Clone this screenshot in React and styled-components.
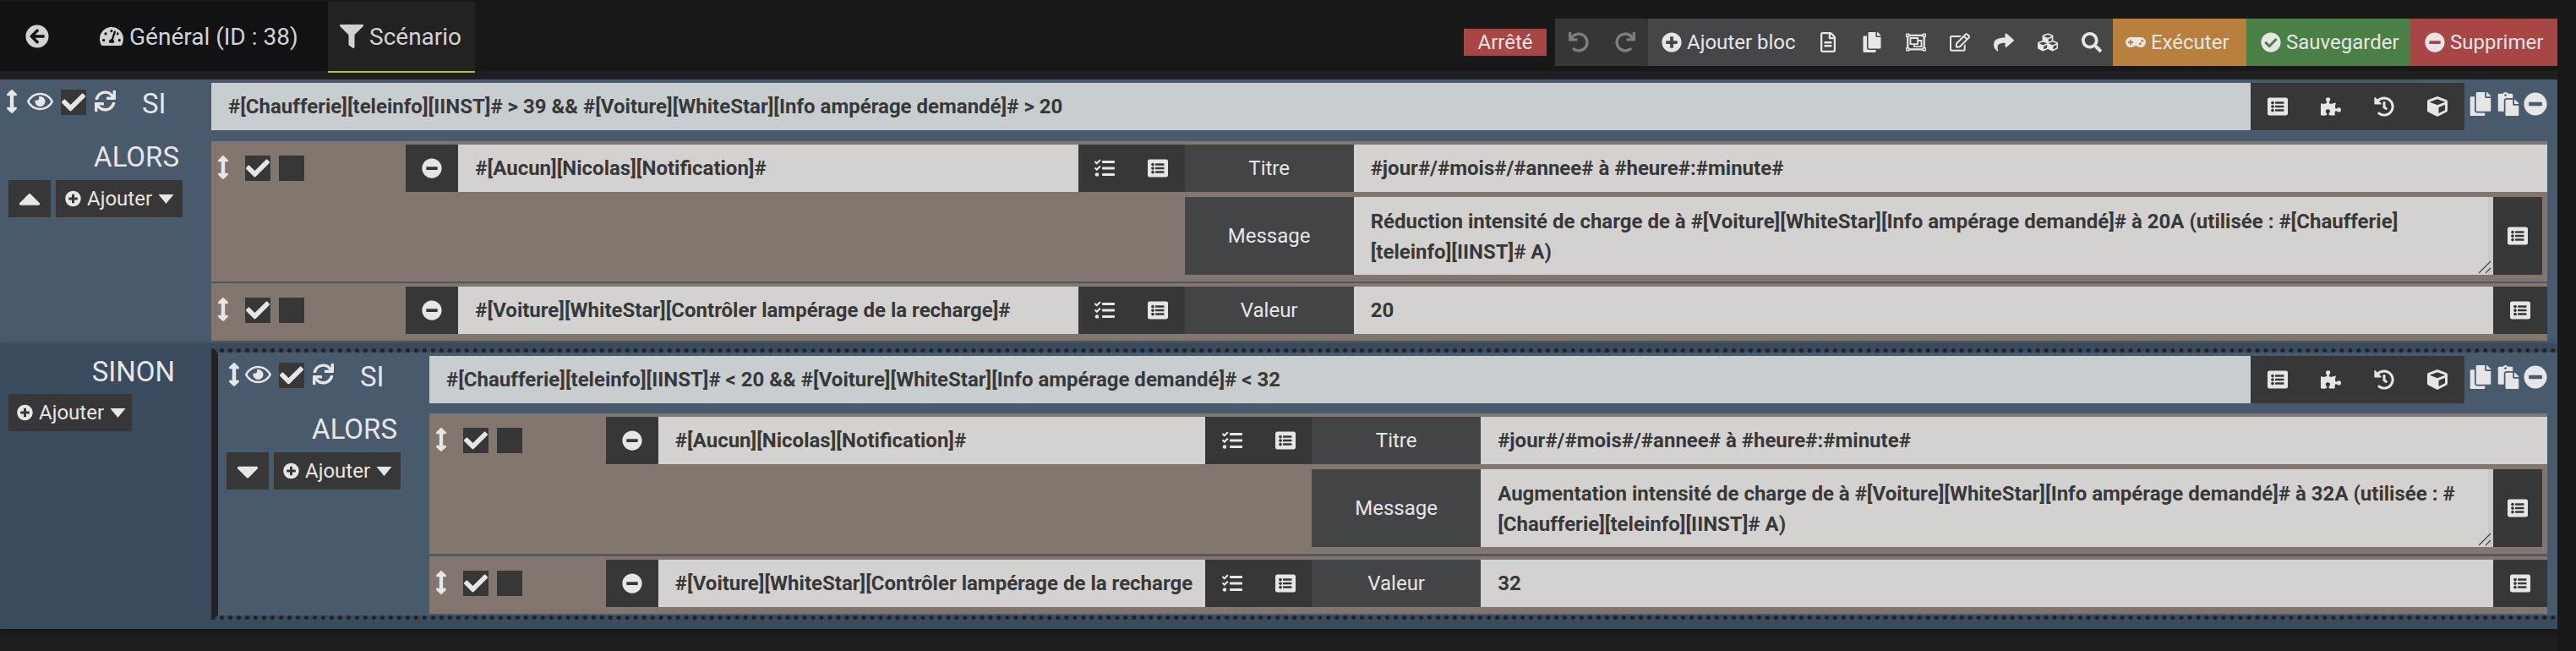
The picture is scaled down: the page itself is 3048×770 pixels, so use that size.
import React from "react";
import styled, { createGlobalStyle } from "styled-components";
import {
  FaArrowCircleLeft,
  FaTachometerAlt,
  FaFilter,
  FaUndo,
  FaRedo,
  FaPlusCircle,
  FaRegFileAlt,
  FaCopy,
  FaRegObjectGroup,
  FaRegEdit,
  FaShare,
  FaCubes,
  FaSearch,
  FaGamepad,
  FaCheckCircle,
  FaMinusCircle,
  FaArrowsAltV,
  FaRegEye,
  FaCheck,
  FaSync,
  FaCaretUp,
  FaCaretDown,
  FaTasks,
  FaListAlt,
  FaPuzzlePiece,
  FaHistory,
  FaCube,
  FaPaste,
} from "react-icons/fa";

const GlobalStyle = createGlobalStyle`
  html, body {
    margin: 0;
    height: 100%;
    overflow: hidden;
    background: #181818;
  }
  * {
    box-sizing: border-box;
  }
  body {
    font-family: Roboto, "Liberation Sans", sans-serif;
    font-size: 24px;
    color: #e6e6e6;
  }
  svg {
    width: auto;
    height: 1em;
    flex: none;
  }
`;

const Page = styled.div`
  display: flex;
  height: 770px;
`;
const Content = styled.div`
  width: 3026px;
  background: #1f1f1f;
`;
const Scrollbar = styled.div`
  flex: 1;
  background: #181818;
`;

/* top bar */
const NavBar = styled.div`
  display: flex;
  justify-content: space-between;
  height: 94px;
  background: linear-gradient(#181818 84px, #1f1f1f 84px);
`;
const Tabs = styled.div`
  display: flex;
  height: 86px;
  padding-top: 2px;
`;
const Tab = styled.div`
  display: flex;
  align-items: center;
  gap: 7px;
  width: ${(props) => props.$width}px;
  padding-left: ${(props) => props.$pad}px;
  font-size: 28px;
  color: #d2d2d2;
  background: ${(props) => (props.$active ? "#222222" : "#101214")};
  background-clip: padding-box;
  border-bottom: 2px solid ${(props) => (props.$active ? "#a4c639" : "transparent")};
`;
const NavRight = styled.div`
  display: flex;
  align-items: center;
  height: 56px;
  margin-top: 22px;
`;
const Status = styled.div`
  display: flex;
  align-items: center;
  justify-content: center;
  width: 98px;
  height: 32px;
  margin-right: 10px;
  background: #a84545;
`;
const ToolGroup = styled.div`
  display: flex;
  height: 56px;
  background: ${(props) => props.$bg};
`;
const ToolIcon = styled.div`
  display: flex;
  align-items: center;
  justify-content: center;
  width: ${(props) => props.$width}px;
  color: ${(props) => props.$color || "#e6e6e6"};
  font-size: 24px;
`;
const ToolButton = styled.div`
  display: flex;
  align-items: center;
  gap: 6px;
  height: 56px;
  width: ${(props) => props.$width}px;
  padding-left: ${(props) => props.$pad}px;
  background: ${(props) => props.$bg || "transparent"};
`;

/* scenario blocks */
const Block = styled.div`
  display: grid;
  grid-template-columns: 250px 1fr;
  grid-template-rows: 56px auto;
  row-gap: ${(props) => (props.$nested ? 12 : 13)}px;
  padding: 4px 12px ${(props) => (props.$nested ? 2 : 3)}px 0;
  background: #485a6c;
`;
const SiTools = styled.div`
  display: flex;
  align-items: flex-start;
  padding-top: 8px;
  padding-left: ${(props) => (props.$nested ? 12 : 7)}px;
`;
const SiLabel = styled.div`
  margin-left: 31px;
  font-size: 33px;
  line-height: 30px;
  padding-top: 2px;
`;
const SortIcon = styled(FaArrowsAltV)`
  flex: none;
  width: 14px;
  height: 28px;
  color: #e6e6e6;
`;
const EyeIcon = styled(FaRegEye)`
  flex: none;
  width: 31px;
  height: 28px;
  margin: 0 9px 0 ${(props) => (props.$nested ? 6 : 11)}px;
`;
const SyncIcon = styled(FaSync)`
  flex: none;
  width: 25px;
  height: 25px;
  margin: 1px 0 0 10px;
`;
const CheckBox = styled.div`
  flex: none;
  display: flex;
  align-items: center;
  justify-content: center;
  width: 30px;
  height: 30px;
  background: #373737;
`;
const CheckIcon = styled(FaCheck)`
  width: 28px;
  height: 28px;
`;
const ConditionRow = styled.div`
  display: flex;
  height: 56px;
`;
const ConditionInput = styled.div`
  flex: 1;
  display: flex;
  align-items: center;
  min-width: 0;
  padding: 0 20px;
  background: #c8cdd0;
  color: #383838;
  font-weight: 700;
  font-size: 24px;
`;
const Addon = styled.div`
  display: flex;
  width: 253px;
  background: #373737;
`;
const AddonIcon = styled.div`
  flex: 1;
  display: flex;
  align-items: center;
  justify-content: center;
  font-size: 24px;
`;
const BlockIcons = styled.div`
  display: flex;
  align-items: flex-start;
  justify-content: space-between;
  width: 98px;
  padding: 11px 0 0 5px;
  font-size: 28px;
`;

const AlorsCol = styled.div`
  padding-left: 10px;
`;
const BigLabel = styled.div`
  font-size: 33px;
  line-height: ${(props) => (props.$lift ? 38 : 46)}px;
  padding-bottom: ${(props) => (props.$lift ? 8 : 0)}px;
  text-align: right;
  width: ${(props) => props.$width}px;
`;
const BtnRow = styled.div`
  display: flex;
  gap: 6px;
`;
const SquareBtn = styled.div`
  display: flex;
  align-items: center;
  justify-content: center;
  width: 50px;
  height: 44px;
  background: #373737;
  overflow: hidden;
`;
const AddBtn = styled.div`
  display: flex;
  align-items: center;
  width: ${(props) => props.$width}px;
  height: 44px;
  padding-left: 11px;
  gap: 7px;
  background: #373737;
  overflow: hidden;
`;
const BigCaretUp = styled(FaCaretUp)`
  width: 26px;
  height: 42px;
`;
const BigCaretDown = styled(FaCaretDown)`
  width: 26px;
  height: 42px;
`;
const SmallCaret = styled.svg`
  flex: none;
  width: 19px;
  height: 11px;
  fill: #e6e6e6;
`;

const ActionList = styled.div`
  display: flex;
  flex-direction: column;
  gap: ${(props) => (props.$nested ? 3 : 2)}px;
`;
const Action = styled.div`
  display: grid;
  grid-template-columns: 8.3333% 33.3333% 1fr;
  padding: 4px 0 8px;
  background: #82766f;
`;
const ActionTools = styled.div`
  display: flex;
  align-items: flex-start;
  gap: 10px;
  padding: 13px 0 0 7px;
`;
const ActionSort = styled(SortIcon)`
  margin-right: 9px;
`;
const EmptyBox = styled(CheckBox)``;
const ExprRow = styled.div`
  display: flex;
  height: 56px;
`;
const DarkCell = styled.div`
  flex: none;
  display: flex;
  align-items: center;
  justify-content: center;
  width: ${(props) => props.$width}px;
  height: ${(props) => props.$height || 56}px;
  background: #373737;
  font-size: 24px;
`;
const IconHalf = styled.div`
  flex: 1;
  display: flex;
  align-items: center;
  justify-content: center;
`;
const ExprInput = styled.div`
  flex: 1;
  display: flex;
  align-items: center;
  min-width: 0;
  padding: 0 17px 0 20px;
  background: #d3d2d0;
  color: #383838;
  font-weight: 700;
  white-space: nowrap;
`;
const Options = styled.div`
  display: flex;
  flex-direction: column;
  gap: 6px;
`;
const OptionRow = styled.div`
  display: flex;
  padding-right: ${(props) => props.$gapRight || 0}px;
`;
const OptionLabel = styled.div`
  flex: none;
  display: flex;
  align-items: center;
  justify-content: center;
  width: 200px;
  background: #434446;
`;
const OptionValue = styled.div`
  position: relative;
  flex: 1;
  min-height: 56px;
  padding: ${(props) => (props.$area ? "11px 20px 9px" : "10px 20px")};
  background: #d3d2d0;
  color: #383838;
  font-weight: 700;
  line-height: 36px;
  border-right: ${(props) => (props.$area ? "6px solid #c9c9c9" : "none")};
`;
const Grip = styled.svg`
  position: absolute;
  right: -4px;
  bottom: 1px;
  width: 16px;
  height: 16px;
`;

/* SINON */
const ElseBlock = styled.div`
  display: grid;
  grid-template-columns: 250px 1fr;
  height: 338px;
  padding-top: 6px;
  background: #3a4b5d;
  box-shadow: 0 4px 10px rgba(0, 0, 0, 0.35);
`;
const ElseCol = styled.div`
  padding: 5px 0 0 10px;
`;
const ElseBtn = styled(AddBtn)`
  margin-top: 3px;
  padding-left: 10px;
`;
const Nested = styled.div`
  align-self: start;
  border-top: 5px dotted #222222;
  border-bottom: 5px dotted #222222;
  border-left: 8px solid #222222;
`;

const PlusIcon = styled(FaPlusCircle)`
  flex: none;
  width: 19px;
  height: 20px;
`;

function Caret() {
  return (
    <SmallCaret viewBox="0 0 19 11">
      <path d="M0.5 0H18.5L9.5 11Z" />
    </SmallCaret>
  );
}

function Option({ label, children, area, button }) {
  return (
    <OptionRow $gapRight={area ? 6 : 0}>
      <OptionLabel>{label}</OptionLabel>
      <OptionValue $area={area}>
        {children}
        {area && (
          <Grip viewBox="0 0 16 16">
            <path d="M1 15L15 1M9 15L15 9" stroke="#444" strokeWidth="1.2" fill="none" />
          </Grip>
        )}
      </OptionValue>
      {button && (
        <DarkCell $width={area ? 58 : 64} $height={area ? 92 : 56}>
          <FaListAlt />
        </DarkCell>
      )}
    </OptionRow>
  );
}

function ActionRow({ expr, options }) {
  return (
    <Action>
      <ActionTools>
        <ActionSort />
        <CheckBox>
          <CheckIcon />
        </CheckBox>
        <EmptyBox />
      </ActionTools>
      <ExprRow>
        <DarkCell $width={62}>
          <FaMinusCircle />
        </DarkCell>
        <ExprInput>{expr}</ExprInput>
        <DarkCell $width={126}>
          <IconHalf>
            <FaTasks />
          </IconHalf>
          <IconHalf>
            <FaListAlt />
          </IconHalf>
        </DarkCell>
      </ExprRow>
      <Options>{options}</Options>
    </Action>
  );
}

function IfBlock({ condition, nested, actions }) {
  return (
    <Block $nested={nested}>
      <SiTools $nested={nested}>
        <SortIcon />
        <EyeIcon $nested={nested} />
        <CheckBox>
          <CheckIcon />
        </CheckBox>
        <SyncIcon />
        <SiLabel>SI</SiLabel>
      </SiTools>
      <ConditionRow>
        <ConditionInput>{condition}</ConditionInput>
        <Addon>
          <AddonIcon>
            <FaListAlt />
          </AddonIcon>
          <AddonIcon>
            <FaPuzzlePiece />
          </AddonIcon>
          <AddonIcon>
            <FaHistory />
          </AddonIcon>
          <AddonIcon>
            <FaCube />
          </AddonIcon>
        </Addon>
        <BlockIcons>
          <FaCopy />
          <FaPaste />
          <FaMinusCircle />
        </BlockIcons>
      </ConditionRow>
      <AlorsCol>
        <BigLabel $width={202} $lift>
          ALORS
        </BigLabel>
        <BtnRow>
          <SquareBtn>{nested ? <BigCaretDown /> : <BigCaretUp />}</SquareBtn>
          <AddBtn $width={150}>
            <PlusIcon />
            Ajouter
            <Caret />
          </AddBtn>
        </BtnRow>
      </AlorsCol>
      <ActionList $nested={nested}>{actions}</ActionList>
    </Block>
  );
}

export default function App() {
  return (
    <Page>
      <GlobalStyle />
      <Content>
        <NavBar>
          <Tabs>
            <Tab $width={118} $pad={30}>
              <FaArrowCircleLeft />
            </Tab>
            <Tab $width={270} $pad={0}>
              <FaTachometerAlt />
              Général (ID : 38)
            </Tab>
            <Tab $width={174} $pad={14} $active>
              <FaFilter />
              Scénario
            </Tab>
          </Tabs>
          <NavRight>
            <Status>Arrêté</Status>
            <ToolGroup $bg="#363637">
              <ToolIcon $width={55} $color="#7f7f7f">
                <FaUndo />
              </ToolIcon>
              <ToolIcon $width={55} $color="#7f7f7f">
                <FaRedo />
              </ToolIcon>
            </ToolGroup>
            <ToolGroup $bg="#464648">
              <ToolButton $width={187} $pad={16}>
                <FaPlusCircle />
                Ajouter bloc
              </ToolButton>
              <ToolIcon $width={52}>
                <FaRegFileAlt />
              </ToolIcon>
              <ToolIcon $width={52}>
                <FaCopy />
              </ToolIcon>
              <ToolIcon $width={52}>
                <FaRegObjectGroup />
              </ToolIcon>
              <ToolIcon $width={52}>
                <FaRegEdit />
              </ToolIcon>
              <ToolIcon $width={52}>
                <FaShare />
              </ToolIcon>
              <ToolIcon $width={52}>
                <FaCubes />
              </ToolIcon>
              <ToolIcon $width={51}>
                <FaSearch />
              </ToolIcon>
            </ToolGroup>
            <ToolButton $width={158} $pad={15} $bg="#b8803c">
              <FaGamepad />
              Exécuter
            </ToolButton>
            <ToolButton $width={194} $pad={17} $bg="#4a8045">
              <FaCheckCircle />
              Sauvegarder
            </ToolButton>
            <ToolButton $width={174} $pad={17} $bg="#a84545">
              <FaMinusCircle />
              Supprimer
            </ToolButton>
          </NavRight>
        </NavBar>

        <IfBlock
          condition="#[Chaufferie][teleinfo][IINST]# > 39 && #[Voiture][WhiteStar][Info ampérage demandé]# > 20"
          actions={
            <>
              <ActionRow
                expr="#[Aucun][Nicolas][Notification]#"
                options={
                  <>
                    <Option label="Titre">#jour#/#mois#/#annee# à #heure#:#minute#</Option>
                    <Option label="Message" area button>
                      Réduction intensité de charge de à #[Voiture][WhiteStar][Info ampérage demandé]# à 20A (utilisée : #[Chaufferie]
                      <br />
                      [teleinfo][IINST]# A)
                    </Option>
                  </>
                }
              />
              <ActionRow
                expr="#[Voiture][WhiteStar][Contrôler lampérage de la recharge]#"
                options={
                  <Option label="Valeur" button>
                    20
                  </Option>
                }
              />
            </>
          }
        />

        <ElseBlock>
          <ElseCol>
            <BigLabel $width={197}>SINON</BigLabel>
            <ElseBtn $width={146}>
              <PlusIcon />
              Ajouter
              <Caret />
            </ElseBtn>
          </ElseCol>
          <Nested>
            <IfBlock
              nested
              condition="#[Chaufferie][teleinfo][IINST]# < 20 && #[Voiture][WhiteStar][Info ampérage demandé]# < 32"
              actions={
                <>
                  <ActionRow
                    expr="#[Aucun][Nicolas][Notification]#"
                    options={
                      <>
                        <Option label="Titre">#jour#/#mois#/#annee# à #heure#:#minute#</Option>
                        <Option label="Message" area button>
                          Augmentation intensité de charge de à #[Voiture][WhiteStar][Info ampérage demandé]# à 32A (utilisée : #
                          <br />
                          [Chaufferie][teleinfo][IINST]# A)
                        </Option>
                      </>
                    }
                  />
                  <ActionRow
                    expr="#[Voiture][WhiteStar][Contrôler lampérage de la recharge"
                    options={
                      <Option label="Valeur" button>
                        32
                      </Option>
                    }
                  />
                </>
              }
            />
          </Nested>
        </ElseBlock>
      </Content>
      <Scrollbar />
    </Page>
  );
}
